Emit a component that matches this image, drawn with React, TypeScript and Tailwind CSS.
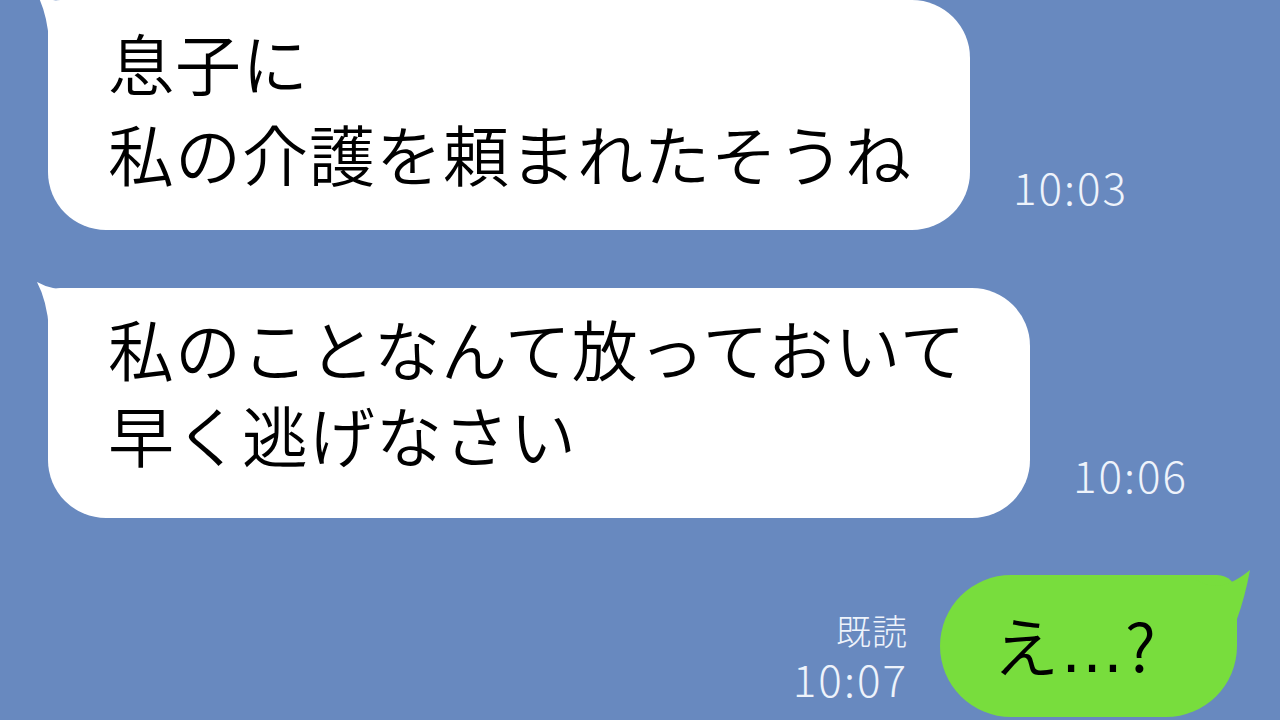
import React from 'react';

type Msg = {
  lines: string[];
  time: string;
  width: string;
  leading: string;
};

const INCOMING: Msg[] = [
  { lines: ['息子に', '私の介護を頼まれたそうね'], time: '10:03', width: 'w-[922px]', leading: 'leading-[91px]' },
  { lines: ['私のことなんて放っておいて', '早く逃げなさい'], time: '10:06', width: 'w-[982px]', leading: 'leading-[86px]' },
];

// little hook in the top-left corner of a received bubble
function LeftTail() {
  return (
    <svg className="absolute left-[-12px] top-[-7px] w-[56px] h-[48px]" viewBox="0 0 56 48">
      <path d="M1 1 Q20 12 56 8 L56 48 L13 48 Q11 20 1 1 Z" fill="#ffffff" />
    </svg>
  );
}

// hook on the top-right of a sent bubble
function RightTail() {
  return (
    <svg className="absolute right-[-14px] top-[-6px] w-[60px] h-[50px]" viewBox="0 0 60 50">
      <path d="M0 6 Q24 30 59 1 Q54 28 46 50 L0 50 Z" fill="#78dd3d" />
    </svg>
  );
}

function Incoming({ msg }: { msg: Msg }) {
  return (
    <div className="flex items-end gap-[43px]">
      <div
        className={`relative ${msg.width} h-[230px] shrink-0 rounded-[58px] rounded-tl-[12px] bg-white pl-[60px] pt-[16px] text-[66px] font-[350] tracking-[1px] ${msg.leading} text-black`}
      >
        <LeftTail />
        {msg.lines.map((l, i) => (
          <div key={i} className="relative whitespace-nowrap">{l}</div>
        ))}
      </div>
      <div className="mb-[22px] text-[44px] leading-none font-extralight tracking-[2px] text-[#eef3fb]">{msg.time}</div>
    </div>
  );
}

export default function App() {
  return (
    <div className="w-[1280px] h-[720px] overflow-hidden bg-[#6889bf] flex flex-col gap-[58px] pl-[48px] font-['Noto_Sans_CJK_JP',sans-serif]">
      {INCOMING.map((m) => (
        <Incoming key={m.time} msg={m} />
      ))}

      <div className="flex items-end justify-end gap-[32px] pr-[43px] -mt-px">
        <div className="flex flex-col items-end gap-[6px] mb-[17px] text-[#eef3fb]">
          <span className="text-[35px] leading-[40px] font-light tracking-[1px]">既読</span>
          <span className="text-[44px] leading-[44px] font-extralight tracking-[2px]">10:07</span>
        </div>
        <div className="relative w-[297px] h-[142px] shrink-0 rounded-[71px] rounded-tr-[20px] bg-[#78dd3d] flex items-center justify-center text-[66px] leading-none font-[350] text-black">
          <RightTail />
          <span className="relative pr-[28px]">
            え<span className="font-['Liberation_Sans',sans-serif]">…</span>?
          </span>
        </div>
      </div>
    </div>
  );
}
